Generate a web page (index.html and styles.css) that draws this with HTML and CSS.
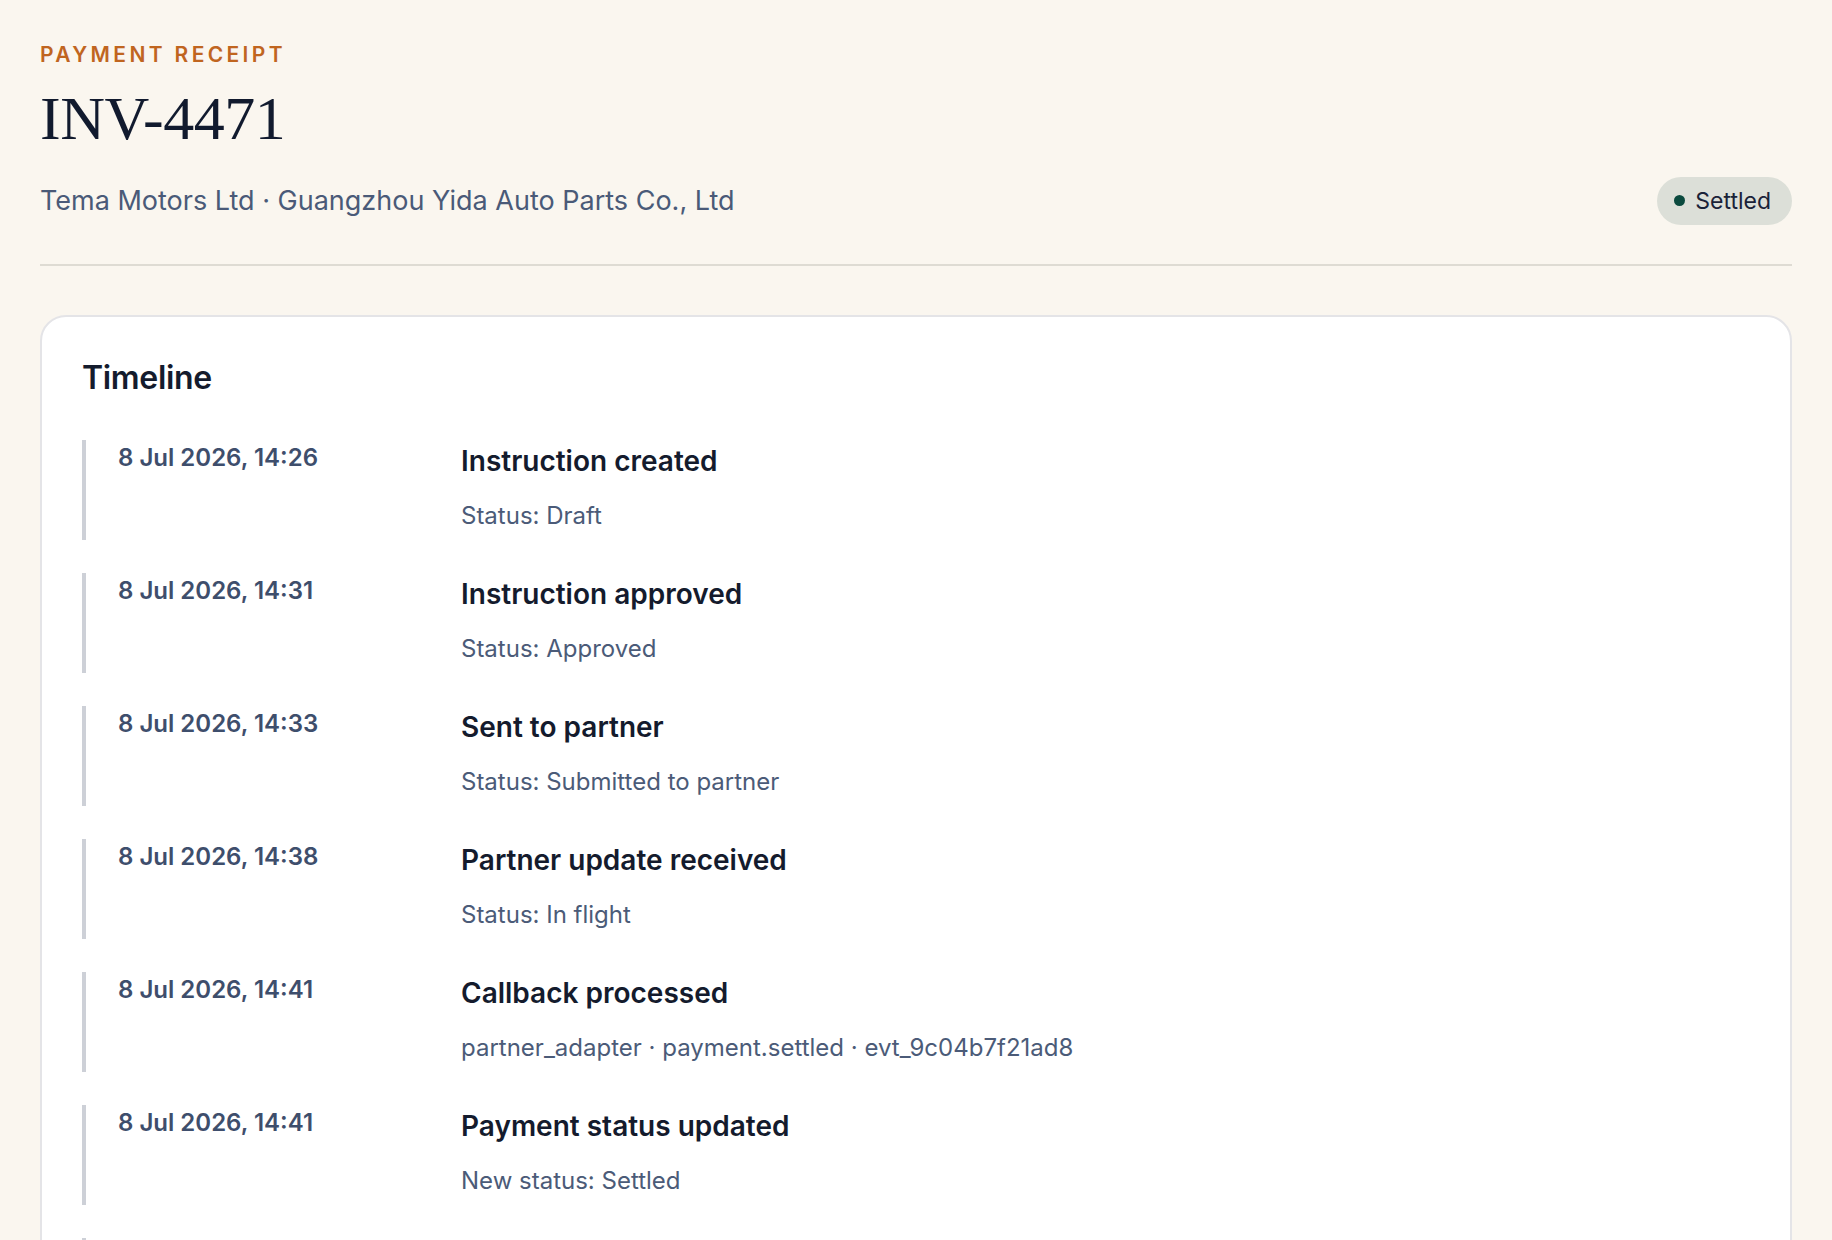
FILE: index.html
```html
<!DOCTYPE html>
<html lang="en">
<head>
    <meta charset="UTF-8">
    <meta name="viewport" content="width=device-width, initial-scale=1.0">
    <title>INV-4471 · Payment receipt</title>
    <link rel="stylesheet" href="styles.css">
</head>
<body>
    <header class="receipt-head">
        <p class="eyebrow">Payment receipt</p>
        <h1 class="invoice-no">INV-4471</h1>
        <div class="parties-row">
            <p class="parties">Tema Motors Ltd · Guangzhou Yida Auto Parts Co., Ltd</p>
            <span class="status-pill"><span class="dot"></span>Settled</span>
        </div>
    </header>

    <section class="card">
        <h2 class="card-title">Timeline</h2>
        <ol class="timeline">
            <li class="event">
                <time class="event-time">8 Jul 2026, 14:26</time>
                <div class="event-body">
                    <h3>Instruction created</h3>
                    <p>Status: Draft</p>
                </div>
            </li>
            <li class="event">
                <time class="event-time">8 Jul 2026, 14:31</time>
                <div class="event-body">
                    <h3>Instruction approved</h3>
                    <p>Status: Approved</p>
                </div>
            </li>
            <li class="event">
                <time class="event-time">8 Jul 2026, 14:33</time>
                <div class="event-body">
                    <h3>Sent to partner</h3>
                    <p>Status: Submitted to partner</p>
                </div>
            </li>
            <li class="event">
                <time class="event-time">8 Jul 2026, 14:38</time>
                <div class="event-body">
                    <h3>Partner update received</h3>
                    <p>Status: In flight</p>
                </div>
            </li>
            <li class="event">
                <time class="event-time">8 Jul 2026, 14:41</time>
                <div class="event-body">
                    <h3>Callback processed</h3>
                    <p>partner_adapter · payment.settled · evt_9c04b7f21ad8</p>
                </div>
            </li>
            <li class="event">
                <time class="event-time">8 Jul 2026, 14:41</time>
                <div class="event-body">
                    <h3>Payment status updated</h3>
                    <p>New status: Settled</p>
                </div>
            </li>
            <li class="event">
                <time class="event-time">8 Jul 2026, 14:42</time>
                <div class="event-body">
                    <h3>Receipt issued</h3>
                    <p>Receipt sent to Tema Motors Ltd</p>
                </div>
            </li>
        </ol>
    </section>
</body>
</html>
```

FILE: styles.css
```css
/* Base */
body {
    margin: 0;
    padding: 42px 40px 40px;
    background: #faf6ef;
    font-family: Inter, "Noto Sans", Arial, sans-serif;
    color: #141b2d;
}
p, h1, h2, h3 {
    margin: 0;
}

/* Header */
.receipt-head {
    border-bottom: 2px solid #dedbd3;
    padding-bottom: 39px;
}
.eyebrow {
    font-size: 21px;
    font-weight: 600;
    letter-spacing: 0.16em;
    text-transform: uppercase;
    color: #c0651f;
    line-height: 1.2;
}
.invoice-no {
    margin-top: 14px;
    font-family: Georgia, "Liberation Serif", "Times New Roman", serif;
    font-variant-numeric: oldstyle-nums;
    font-weight: 400;
    font-size: 62px;
    letter-spacing: -0.5px;
    line-height: 1.2;
    color: #111a2e;
}
.parties-row {
    display: flex;
    align-items: center;
    justify-content: space-between;
    margin-top: 21px;
}
.parties {
    font-size: 27px;
    line-height: 1.4;
    color: #4a5a78;
}
.status-pill {
    display: inline-flex;
    align-items: center;
    gap: 10px;
    height: 48px;
    padding: 0 21px 0 17px;
    border-radius: 24px;
    background: #dcdfd8;
    font-size: 23px;
    color: #1a2238;
}
.status-pill .dot {
    width: 11px;
    height: 11px;
    border-radius: 50%;
    background: #0b4a3e;
}

/* Timeline card */
.card {
    margin-top: 49px;
    background: #fff;
    border: 2px solid #e4e4e7;
    border-radius: 26px;
    padding: 40px 40px 40px;
}
.card-title {
    font-size: 32px;
    font-weight: 600;
    letter-spacing: -0.01em;
    line-height: 1.3;
}
.timeline {
    list-style: none;
    margin: 42px 0 0;
    padding: 0;
    display: flex;
    flex-direction: column;
    gap: 33px;
}
.event {
    display: grid;
    grid-template-columns: 343px 1fr;
    border-left: 4px solid #cdd0d7;
    padding: 0 0 6px 32px;
}
.event-time {
    font-size: 24px;
    font-weight: 600;
    color: #3e4e6c;
    line-height: 1.5;
}
.event-body h3 {
    font-size: 28px;
    font-weight: 600;
    line-height: 1.5;
    color: #141b2d;
}
.event-body p {
    margin-top: 16px;
    font-size: 24px;
    line-height: 1.5;
    color: #4b5b78;
}
```
